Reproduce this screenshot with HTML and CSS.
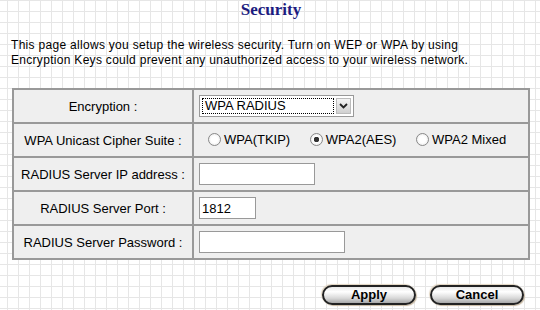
FILE: index.html
```html
<!DOCTYPE html>
<html>
<head>
<meta charset="utf-8">
<title>Security</title>
<link rel="stylesheet" href="styles.css">
</head>
<body>
<h1 class="title">Security</h1>
<p class="intro">This page allows you setup the wireless security. Turn on WEP or WPA by using<br>Encryption Keys could prevent any unauthorized access to your wireless network.</p>
<table class="form">
  <tr>
    <td class="label">Encryption :</td>
    <td class="field">
      <div class="select">
        <span class="select-value"><span class="focus">WPA RADIUS</span></span>
        <span class="select-btn"><svg width="9" height="6" viewBox="0 0 9 6"><path d="M1 1 L4.5 4.5 L8 1" fill="none" stroke="#222" stroke-width="1.8"/></svg></span>
      </div>
    </td>
  </tr>
  <tr>
    <td class="label">WPA Unicast Cipher Suite :</td>
    <td class="field radios">
      <label class="radio"><input type="radio" name="cipher">WPA(TKIP)</label>
      <label class="radio"><input type="radio" name="cipher" checked>WPA2(AES)</label>
      <label class="radio"><input type="radio" name="cipher">WPA2 Mixed</label>
    </td>
  </tr>
  <tr>
    <td class="label">RADIUS Server IP address :</td>
    <td class="field"><input class="text ip" type="text"></td>
  </tr>
  <tr>
    <td class="label">RADIUS Server Port :</td>
    <td class="field"><input class="text port" type="text" value="1812"></td>
  </tr>
  <tr>
    <td class="label">RADIUS Server Password :</td>
    <td class="field"><input class="text pass" type="password"></td>
  </tr>
</table>
<div class="actions">
  <button class="pill">Apply</button>
  <button class="pill">Cancel</button>
</div>
</body>
</html>
```

FILE: styles.css
```css
html, body {
  margin: 0;
  padding: 0;
}
body {
  width: 540px;
  height: 310px;
  overflow: hidden;
  background-color: #fff;
  background-image:
    linear-gradient(to right, #e6e6e6 1px, transparent 1px),
    linear-gradient(to bottom, #e6e6e6 1px, transparent 1px);
  background-size: 11px 11px;
  background-position: 7px 0;
  font-family: "Liberation Sans", Arial, sans-serif;
  color: #000;
}
.title {
  margin: 0;
  font-family: "Liberation Serif", "Times New Roman", serif;
  font-size: 17px;
  font-weight: bold;
  line-height: 20px;
  text-align: center;
  color: #1c1c80;
  padding-left: 2px;
}
.intro {
  margin: 18px 0 0 0;
  padding-left: 11px;
  font-size: 12px;
  letter-spacing: 0.3px;
  line-height: 15px;
}
.form {
  margin: 20px 0 0 12px;
  width: 518px;
  border-collapse: separate;
  border-spacing: 0;
  border: 1px solid #999;
  background: #efefef;
}
.form td {
  border: 1px solid #999;
  height: 32px;
  padding: 0;
  font-size: 13px;
  vertical-align: middle;
}
.label {
  width: 180px;
  box-sizing: border-box;
  text-align: center;
}
.field {
  padding-left: 5px !important;
}
.select {
  display: inline-flex;
  width: 155px;
  height: 22px;
  box-sizing: border-box;
  border: 1px solid #999;
  background: #fff;
  padding: 2px;
  vertical-align: middle;
}
.select-value {
  flex: 1;
  display: flex;
}
.focus {
  flex: 1;
  border: 1px dotted #000;
  line-height: 14px;
  padding-left: 2px;
  font-size: 13px;
}
.select-btn {
  width: 13px;
  margin-left: 2px;
  background: linear-gradient(#f4f4f4, #d0d0d0);
  border: 1px solid #bbb;
  display: flex;
  align-items: center;
  justify-content: center;
}
.radios {
  padding-left: 14px !important;
}
.radio {
  display: inline-flex;
  align-items: center;
  margin-right: 16px;
}
.radio input {
  appearance: none;
  -webkit-appearance: none;
  margin: 0 3px 0 0;
  width: 13px;
  height: 13px;
  border: 1px solid #888;
  border-radius: 50%;
  background: radial-gradient(circle at 50% 50%, #fff 40%, #e4e4e4 100%);
  box-sizing: border-box;
}
.radio input:checked {
  background:
    radial-gradient(circle at 50% 50%, #333 0, #333 2.5px, transparent 3px),
    radial-gradient(circle at 50% 50%, #fff 40%, #e4e4e4 100%);
}
.text {
  height: 22px;
  box-sizing: border-box;
  border: 1px solid #999;
  background: #fff;
  padding: 0 2px;
  margin: 0;
  font-family: "Liberation Sans", Arial, sans-serif;
  font-size: 13px;
  vertical-align: middle;
}
.ip { width: 116px; }
.port { width: 57px; }
.pass { width: 146px; }
.actions {
  display: flex;
  justify-content: flex-end;
  gap: 14px;
  padding: 25px 16px 0 0;
}
.pill {
  width: 94px;
  height: 20px;
  padding: 0;
  border: 2px solid #222;
  border-radius: 10px;
  background: linear-gradient(#e8e8e8 0%, #ffffff 30%, #d8d8d8 70%, #a8a8a8 100%);
  box-shadow: 1px 1px 1px #c8b8a0, -1px -1px 1px #e0d4c0;
  font-family: "Liberation Sans", Arial, sans-serif;
  font-size: 13px;
  font-weight: bold;
  color: #000;
  line-height: 16px;
}
```
